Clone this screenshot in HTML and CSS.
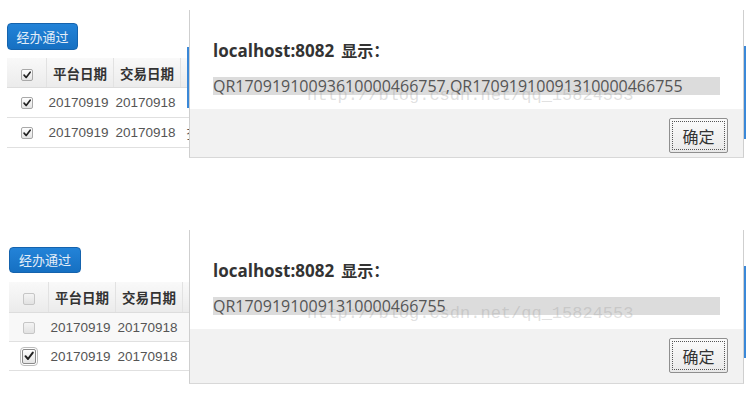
FILE: index.html
```html
<!DOCTYPE html>
<html lang="zh-CN">
<head>
<meta charset="utf-8">
<title>alert</title>
<link rel="stylesheet" href="styles.css">
</head>
<body>
<section class="shot shot-top">
  <div class="page">
    <button class="btn-primary">经办通过</button>
    <table class="grid">
      <thead>
        <tr><th class="c-cb"><span class="cb on"><svg viewBox="0 0 12 12"><path d="M2.5 6.2 L5 9 L9.8 2.6" /></svg></span></th><th class="c-d">平台日期</th><th class="c-d">交易日期</th><th class="c-x"></th></tr>
      </thead>
      <tbody>
        <tr><td class="c-cb"><span class="cb on"><svg viewBox="0 0 12 12"><path d="M2.5 6.2 L5 9 L9.8 2.6" /></svg></span></td><td>20170919</td><td>20170918</td><td class="c-x"></td></tr>
        <tr><td class="c-cb"><span class="cb on"><svg viewBox="0 0 12 12"><path d="M2.5 6.2 L5 9 L9.8 2.6" /></svg></span></td><td>20170919</td><td>20170918</td><td class="c-x">查</td></tr>
      </tbody>
    </table>
  </div>
  <span class="edge edge-l"></span>
  <span class="edge edge-r"></span>
  <div class="alert">
    <div class="alert-body">
      <div class="alert-title">localhost:8082<span class="cjk">显示：</span></div>
      <div class="alert-msg">QR17091910093610000466757,QR17091910091310000466755</div>
    </div>
    <div class="alert-foot"><button class="btn-ok">确定</button></div>
  </div>
  <span class="watermark">http://blog.csdn.net/qq_15824553</span>
</section>

<section class="shot shot-bottom">
  <div class="page">
    <button class="btn-primary">经办通过</button>
    <table class="grid striped">
      <thead>
        <tr><th class="c-cb"><span class="cb off"></span></th><th class="c-d">平台日期</th><th class="c-d">交易日期</th><th class="c-x"></th></tr>
      </thead>
      <tbody>
        <tr><td class="c-cb"><span class="cb off"></span></td><td>20170919</td><td>20170918</td><td class="c-x"></td></tr>
        <tr><td class="c-cb"><span class="cb on focus"><svg viewBox="0 0 12 12"><path d="M2.5 6.2 L5 9 L9.8 2.6" /></svg></span></td><td>20170919</td><td>20170918</td><td class="c-x"></td></tr>
      </tbody>
    </table>
  </div>
  <span class="edge edge-r"></span>
  <div class="alert">
    <div class="alert-body">
      <div class="alert-title">localhost:8082<span class="cjk">显示：</span></div>
      <div class="alert-msg">QR17091910091310000466755</div>
    </div>
    <div class="alert-foot"><button class="btn-ok">确定</button></div>
  </div>
  <span class="watermark">http://blog.csdn.net/qq_15824553</span>
</section>
</body>
</html>
```

FILE: styles.css
```css
html, body {
  margin: 0;
  padding: 0;
  background: #ffffff;
}

body {
  width: 753px;
  height: 397px;
  overflow: hidden;
  font-family: "Liberation Sans", "Noto Sans CJK SC", sans-serif;
}

.shot {
  position: relative;
  overflow: hidden;
}

.shot-top {
  height: 220px;
}

.shot-bottom {
  height: 177px;
}

.page {
  display: flex;
  flex-direction: column;
  align-items: flex-start;
}

.shot-top .page {
  padding: 23px 0 0 7px;
}

.shot-bottom .page {
  padding: 27px 0 0 9px;
}

.btn-primary {
  width: 71px;
  height: 27px;
  padding: 0;
  border: 1px solid #1563ad;
  border-radius: 4px;
  background: linear-gradient(#2383d8, #1670c2);
  color: #e3edf8;
  font-family: "Noto Sans CJK SC", sans-serif;
  font-size: 13px;
  line-height: 25px;
}

.shot-bottom .btn-primary {
  width: 72px;
  height: 26px;
  line-height: 24px;
}

.grid {
  border-collapse: collapse;
  table-layout: fixed;
  margin-top: 8px;
  font-size: 13.5px;
  color: #555;
}

.shot-bottom .grid {
  margin-top: 9px;
}

.grid th {
  height: 29px;
  padding: 0;
  background: linear-gradient(#f9f9f9, #ebebeb);
  border-right: 1px solid #e2e2e2;
  border-bottom: 1px solid #dddddd;
  color: #333;
  font-weight: bold;
  font-family: "Noto Sans CJK SC", sans-serif;
  font-size: 13.5px;
  text-align: center;
  white-space: nowrap;
}

.shot-bottom .grid th {
  height: 30px;
}

.grid td {
  height: 29px;
  padding: 0 0 0 2px;
  border-bottom: 1px solid #e0e0e0;
  white-space: nowrap;
  overflow: hidden;
}

.shot-bottom .grid td {
  height: 28px;
}

.grid .c-cb {
  width: 39px;
  padding: 0;
  text-align: center;
}

.grid .c-d {
  width: 66px;
}

.grid .c-x {
  width: 60px;
  padding-left: 6px;
  text-align: left;
}

.striped tbody tr:first-child td {
  background: #f8f8f8;
}

.cb {
  display: inline-block;
  box-sizing: border-box;
  width: 12px;
  height: 12px;
  border: 1px solid #a9a9a9;
  border-radius: 2px;
  background: linear-gradient(#ffffff, #e4e4e4);
  vertical-align: middle;
}

.cb svg {
  display: block;
  width: 10px;
  height: 10px;
}

.cb svg path {
  fill: none;
  stroke: #222;
  stroke-width: 2;
  stroke-linecap: round;
  stroke-linejoin: round;
}

.cb.off {
  border-color: #c6c6c6;
  background: linear-gradient(#f4f4f4, #e2e2e2);
}

.cb.focus {
  width: 14px;
  height: 15px;
  border: 1px solid #8a8a8a;
  outline: 1px solid #bdbdbd;
  outline-offset: 1px;
}

.cb.focus svg {
  width: 12px;
  height: 12px;
}

.edge {
  position: absolute;
  width: 2px;
  background: #3a88d8;
}

.shot-top .edge-l {
  left: 187px;
  top: 47px;
  height: 61px;
}

.shot-top .edge-r {
  left: 744px;
  top: 46px;
  height: 93px;
}

.shot-bottom .edge-r {
  left: 744px;
  top: 46px;
  height: 92px;
}

.alert {
  position: absolute;
  left: 189px;
  top: 10px;
  width: 555px;
  box-sizing: border-box;
  border-left: 1px solid #cfcfcf;
  border-right: 1px solid #cfcfcf;
  border-bottom: 1px solid #d8d8d8;
  background: #ffffff;
  font-family: "Open Sans", "Noto Sans CJK SC", sans-serif;
  display: flex;
  flex-direction: column;
}

.alert-body {
  padding: 29px 23px 14px;
  display: flex;
  flex-direction: column;
  gap: 15px;
}

.alert-title {
  font-size: 17px;
  line-height: 22px;
  font-weight: bold;
  color: #333;
}

.alert-title .cjk {
  margin-left: 7px;
  font-family: "Noto Sans CJK SC", sans-serif;
  font-size: 16px;
}

.alert-msg {
  width: 507px;
  height: 18px;
  background: #dcdcdc;
  color: #555;
  font-size: 16px;
  line-height: 18px;
  white-space: nowrap;
}

.alert-foot {
  height: 48px;
  box-sizing: border-box;
  padding: 9px 15px 0 0;
  background: #f2f2f2;
  display: flex;
  justify-content: flex-end;
  align-items: flex-start;
}

.shot-bottom .alert-foot {
  height: 54px;
}

.btn-ok {
  width: 59px;
  height: 35px;
  border: 1px solid #8f8f8f;
  border-radius: 2px;
  background: linear-gradient(#fbfbfb, #e9e9e9);
  outline: 1px dotted #555;
  outline-offset: -4px;
  color: #333;
  font-family: "Noto Sans CJK SC", sans-serif;
  font-size: 16px;
  line-height: 20px;
  padding: 0;
}

.watermark {
  position: absolute;
  left: 307px;
  top: 86px;
  font-family: "Liberation Mono", monospace;
  font-size: 17px;
  line-height: 19px;
  color: rgba(150, 150, 150, 0.3);
  white-space: nowrap;
  pointer-events: none;
}

.shot-bottom .watermark {
  top: 84px;
}
```
